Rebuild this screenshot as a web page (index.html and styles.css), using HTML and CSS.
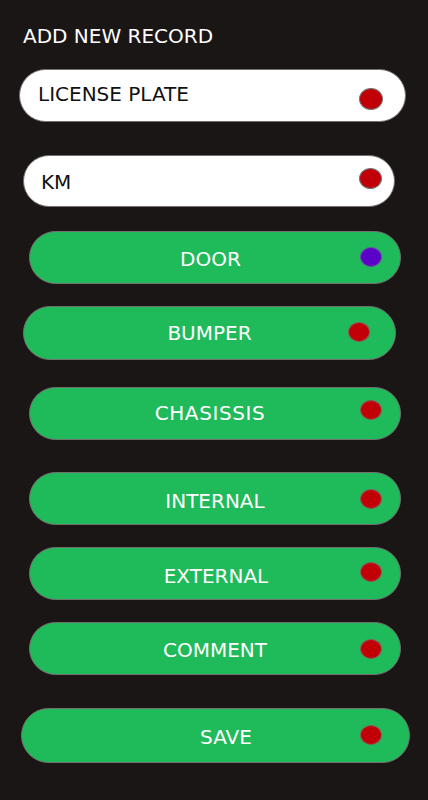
FILE: index.html
```html
<!DOCTYPE html>
<html>
<head>
<meta charset="utf-8">
<link rel="stylesheet" href="styles.css">
</head>
<body>
<main class="screen">
  <h1 class="title">ADD NEW RECORD</h1>
  <div class="field input r-lp"><span>LICENSE PLATE</span><i class="dot red"></i></div>
  <div class="field input r-km"><span>KM</span><i class="dot red"></i></div>
  <div class="field btn r-door"><span>DOOR</span><i class="dot purple"></i></div>
  <div class="field btn r-bumper"><span>BUMPER</span><i class="dot red"></i></div>
  <div class="field btn r-chas"><span>CHASISSIS</span><i class="dot red"></i></div>
  <div class="field btn r-int"><span>INTERNAL</span><i class="dot red"></i></div>
  <div class="field btn r-ext"><span>EXTERNAL</span><i class="dot red"></i></div>
  <div class="field btn r-comm"><span>COMMENT</span><i class="dot red"></i></div>
  <div class="field btn r-save"><span>SAVE</span><i class="dot red"></i></div>
</main>
</body>
</html>
```
FILE: styles.css
```css
html, body {
  margin: 0;
  padding: 0;
  background: #1a1616;
}
.screen {
  width: 428px;
  height: 800px;
  overflow: hidden;
  font-family: "DejaVu Sans", Verdana, sans-serif;
}
.title {
  margin: 0;
  padding: 25px 0 0 23px;
  font-size: 20px;
  line-height: 22px;
  font-weight: normal;
  color: #fff;
}
.field {
  position: relative;
  box-sizing: border-box;
  display: flex;
  align-items: center;
  border: 1px solid #757070;
  border-radius: 999px;
  font-size: 20px;
  line-height: 24px;
}
.input {
  background: #fff;
  color: #111;
  justify-content: flex-start;
}
.btn {
  background: #1fba59;
  color: #fff;
  justify-content: center;
}
.dot {
  position: absolute;
  box-sizing: border-box;
  width: 22px;
  height: 20px;
  border-radius: 50%;
  border: 1px solid #8a5a5a;
}
.red { background: #c00006; }
.purple { background: #5a02c8; border-color: #6a50a0; }

.r-lp { margin: 22px 0 0 19px; width: 387px; height: 53px; padding: 0 0 3px 18px; }
.r-lp .dot { width: 24px; height: 22px; top: 18px; right: 22px; border-color: #777; }
.r-km { margin: 33px 0 0 23px; width: 372px; height: 52px; padding: 2px 0 0 17px; }
.r-km .dot { width: 23px; height: 21px; top: 12px; right: 12px; border-color: #777; }
.r-door { margin: 24px 0 0 29px; width: 372px; height: 53px; padding: 3px 9px 0 0; }
.r-door .dot { top: 14.5px; right: 18px; }
.r-bumper { margin: 22px 0 0 23px; width: 373px; height: 54px; padding: 0 0 1px 0; }
.r-bumper .dot { top: 14.5px; right: 25px; }
.r-chas { margin: 27px 0 0 29px; width: 372px; height: 53px; padding: 0 10px 2px 0; letter-spacing: 0.6px; }
.r-chas .dot { top: 12px; right: 18px; }
.r-int { margin: 32px 0 0 29px; width: 372px; height: 53px; padding: 4px 0 0 0; }
.r-int .dot { top: 16px; right: 18px; }
.r-ext { margin: 22px 0 0 29px; width: 372px; height: 53px; padding: 4px 0 0 2px; }
.r-ext .dot { top: 14px; right: 18px; }
.r-comm { margin: 22px 0 0 29px; width: 372px; height: 53px; padding: 3px 0 0 0; }
.r-comm .dot { top: 16px; right: 18px; }
.r-save { margin: 33px 0 0 21px; width: 389px; height: 55px; padding: 3px 0 0 21px; }
.r-save .dot { top: 16px; right: 27px; }
```
